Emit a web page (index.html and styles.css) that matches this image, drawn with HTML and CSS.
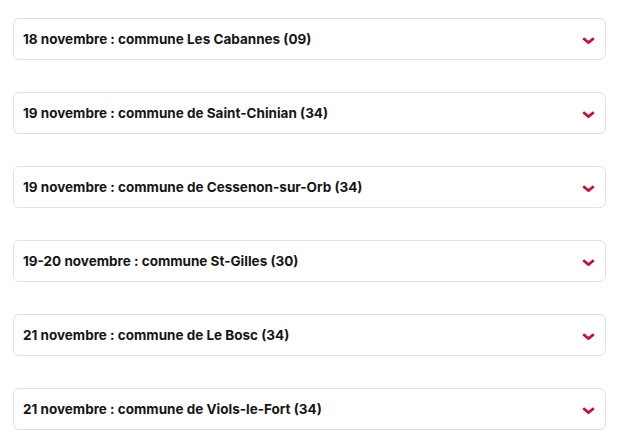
FILE: index.html
```html
<!DOCTYPE html>
<html lang="fr">
<head>
<meta charset="utf-8">
<link rel="stylesheet" href="styles.css">
</head>
<body>
<div class="accordion">
  <div class="item"><span class="title">18 novembre : commune Les Cabannes (09)</span><svg class="chev" viewBox="0 0 13 7"><path d="M1.2 1.2 6.5 5.6 11.8 1.2"/></svg></div>
  <div class="item"><span class="title">19 novembre : commune de Saint-Chinian (34)</span><svg class="chev" viewBox="0 0 13 7"><path d="M1.2 1.2 6.5 5.6 11.8 1.2"/></svg></div>
  <div class="item"><span class="title">19 novembre : commune de Cessenon-sur-Orb (34)</span><svg class="chev" viewBox="0 0 13 7"><path d="M1.2 1.2 6.5 5.6 11.8 1.2"/></svg></div>
  <div class="item"><span class="title">19-20 novembre : commune St-Gilles (30)</span><svg class="chev" viewBox="0 0 13 7"><path d="M1.2 1.2 6.5 5.6 11.8 1.2"/></svg></div>
  <div class="item"><span class="title">21 novembre : commune de Le Bosc (34)</span><svg class="chev" viewBox="0 0 13 7"><path d="M1.2 1.2 6.5 5.6 11.8 1.2"/></svg></div>
  <div class="item"><span class="title">21 novembre : commune de Viols-le-Fort (34)</span><svg class="chev" viewBox="0 0 13 7"><path d="M1.2 1.2 6.5 5.6 11.8 1.2"/></svg></div>
</div>
</body>
</html>
```
FILE: styles.css
```css
html, body {
  margin: 0;
  background: #ffffff;
}
.accordion {
  display: flex;
  flex-direction: column;
  gap: 32px;
  width: 593px;
  padding: 18px 0 0 13px;
  font-family: Inter, "Noto Sans", sans-serif;
}
.item {
  box-sizing: border-box;
  height: 42px;
  display: flex;
  align-items: center;
  justify-content: space-between;
  padding: 0 10px 0 9px;
  border: 1.5px solid #dde1ea;
  border-radius: 6px;
}
.title {
  font-size: 13.5px;
  font-weight: 700;
  color: #161616;
  margin-top: -1px;
}
.chev {
  width: 13px;
  height: 7px;
  fill: none;
  stroke: #c8102e;
  stroke-width: 2.7;
  margin-top: 2px;
}
```
